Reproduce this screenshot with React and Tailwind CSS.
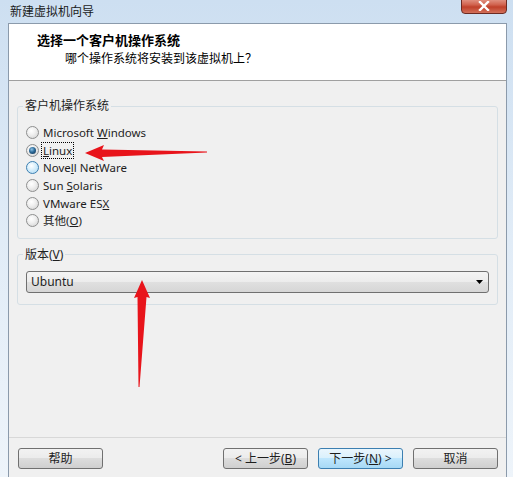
import React from "react";

const FONT = "font-['Segoe_UI','Noto_Sans','Noto_Sans_CJK_SC',sans-serif]";

function Radio({ checked, hover }) {
  return (
    <span
      className={
        "relative flex items-center justify-center w-[13px] h-[13px] rounded-full border shrink-0 " +
        (hover
          ? "border-[#3c7fb1] bg-[radial-gradient(circle_at_40%_35%,#ffffff_0%,#d6eefb_45%,#a9d7f2_100%)]"
          : "border-[#8e8f8f] bg-[radial-gradient(circle_at_40%_35%,#ffffff_0%,#f0f0f0_40%,#cfcfcf_100%)]")
      }
    >
      {checked && (
        <span className="w-[7px] h-[7px] rounded-full bg-[radial-gradient(circle_at_40%_35%,#8fc4e8_0%,#2c6a98_45%,#0e2c48_100%)]" />
      )}
    </span>
  );
}

function Option({ children, checked, hover, focus }) {
  return (
    <div className="flex items-center h-[17.6px] gap-[3px]">
      <Radio checked={checked} hover={hover} />
      <span
        className={
          "text-[11.5px] leading-[15px] text-[#1e1e1e] px-[1px] " +
          (focus ? "outline outline-1 outline-dotted outline-black" : "")
        }
      >
        {children}
      </span>
    </div>
  );
}

function Btn({ children, primary, className = "" }) {
  return (
    <button
      className={
        "w-[85px] h-[21px] rounded-[3px] border text-[12px] leading-none text-[#1e1e1e] flex items-center justify-center " +
        (primary
          ? "border-[#3c7fb1] bg-[linear-gradient(to_bottom,#eaf6fd_0%,#d9f0fc_50%,#bee6fd_50%,#a7d9f5_100%)] "
          : "border-[#707070] bg-[linear-gradient(to_bottom,#f2f2f2_0%,#ebebeb_50%,#dddddd_50%,#cfcfcf_100%)] ") +
        className
      }
    >
      {children}
    </button>
  );
}

export default function App() {
  return (
    <div className={"relative w-[513px] h-[477px] overflow-hidden bg-gradient-to-b from-[#cddff1] via-[#e1ecf7] to-[#eef4fa] " + FONT}>
      {/* Title bar */}
      <div className="relative h-[23px] flex items-center pl-[10px]">
        <span className="text-[12px] text-[#1a1a1a] leading-none">新建虚拟机向导</span>
        <div className="absolute right-[6px] top-[-3px] w-[46px] h-[17px] rounded-b-[4px] border border-[#6b2a22] bg-[linear-gradient(to_bottom,#e6a192_0%,#d1624e_45%,#c0402a_60%,#d2705a_100%)] flex items-center justify-center">
          <svg width="12" height="10" viewBox="0 0 12 10" className="mt-[1px]">
            <path d="M2 1 L10 9 M10 1 L2 9" stroke="#ffffff" strokeWidth="2.4" strokeLinecap="square" />
          </svg>
        </div>
      </div>

      {/* Window client */}
      <div className="ml-[8px] mr-[6px] h-[454px] border-l border-r border-t border-[#8b9aab] bg-[#f0f0f0] flex flex-col">
        {/* Header */}
        <div className="h-[57px] bg-white border-b border-[#a0a0a0] pl-[28px] pt-[8px] shrink-0">
          <div className="text-[13px] leading-[17px] font-bold text-black">选择一个客户机操作系统</div>
          <div className="ml-[28px] mt-[2px] text-[12px] leading-[16px] text-black">哪个操作系统将安装到该虚拟机上？</div>
        </div>

        {/* Body */}
        <div className="flex-1 px-[8px]">
          <fieldset className="mt-[17px] border border-[#d5dfe5] rounded-[3px] px-0 pt-[10px] pb-[8px]">
            <legend className="ml-[5px] px-[2px] text-[12px] leading-[16px] text-[#1e1e1e]">客户机操作系统</legend>
            <div className="pl-[8px]">
              <Option>
                Microsoft <u>W</u>indows
              </Option>
              <Option checked focus>
                <u>L</u>inux
              </Option>
              <Option hover>
                Nove<u>l</u>l NetWare
              </Option>
              <Option>
                Sun <u>S</u>olaris
              </Option>
              <Option>
                VMware ES<u>X</u>
              </Option>
              <Option>
                其他(<u>O</u>)
              </Option>
            </div>
          </fieldset>

          <fieldset className="mt-[8px] border border-[#d5dfe5] rounded-[3px] px-0 pt-[8px] pb-[11px]">
            <legend className="ml-[5px] px-[2px] text-[12px] leading-[16px] text-[#1e1e1e]">
              版本(<u>V</u>)
            </legend>
            <div className="mx-[8px] h-[22px] rounded-[3px] border border-[#707070] bg-[linear-gradient(to_bottom,#f4f4f4_0%,#ececec_50%,#e0e0e0_50%,#d6d6d6_100%)] flex items-center justify-between pl-[4px] pr-[5px]">
              <span className="text-[12px] leading-none text-[#1e1e1e]">Ubuntu</span>
              <svg width="7" height="4" viewBox="0 0 7 4">
                <path d="M0 0 H7 L3.5 4 Z" fill="#000" />
              </svg>
            </div>
          </fieldset>
        </div>

        {/* Footer */}
        <div className="h-[40px] shrink-0 border-t border-[#d8d8d8] flex items-start pt-[10px] pl-[9px] pr-[8px]">
          <Btn>帮助</Btn>
          <div className="flex-1" />
          <div className="flex gap-[10px]">
            <Btn>
              &lt; 上一步(<u>B</u>)
            </Btn>
            <Btn primary>
              下一步(<u>N</u>) &gt;
            </Btn>
            <Btn>取消</Btn>
          </div>
        </div>
      </div>

      {/* Red annotation arrows */}
      <svg className="absolute inset-0 pointer-events-none" width="513" height="477" viewBox="0 0 513 477">
        <polygon points="85,153 104,145 102,149.5 207,151.5 207,152.5 102,157 104,161" fill="#e8141b" />
        <polygon points="142,280 150,298 146.5,297 139.5,387 138.5,387 137.5,297 134,298" fill="#e8141b" />
      </svg>
    </div>
  );
}
